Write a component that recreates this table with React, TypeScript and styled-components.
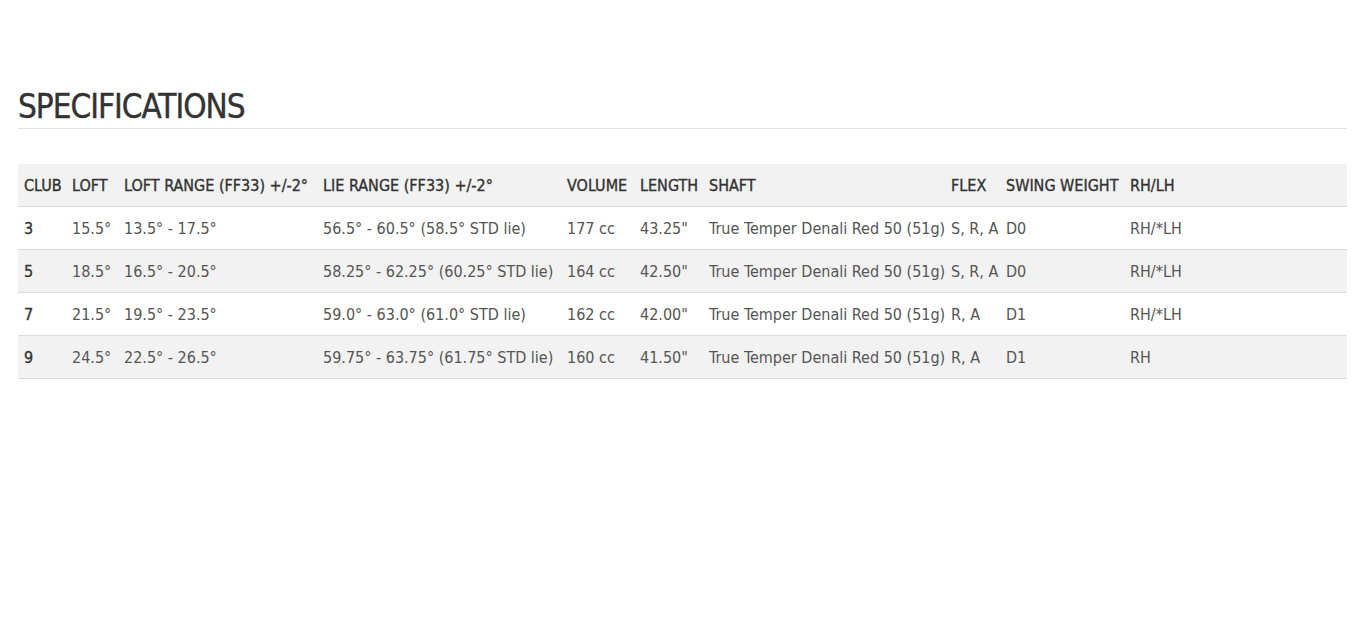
import React from 'react';
import styled, { createGlobalStyle } from 'styled-components';

const GlobalStyle = createGlobalStyle`
  body {
    margin: 0;
    background: #fff;
    font-family: "DejaVu Sans Condensed", "Liberation Sans", sans-serif;
  }
`;

const Page = styled.section`
  padding: 88px 19px 0 18px;
`;

const Title = styled.h2`
  margin: 0;
  font-size: 33px;
  line-height: 38px;
  font-weight: 400;
  color: #333;
  -webkit-text-stroke: 0.4px #333;
  padding-bottom: 2px;
  border-bottom: 1px solid #e2e2e2;
  letter-spacing: -1px;
`;

const SpecTable = styled.table`
  margin-top: 35px;
  width: 100%;
  border-collapse: collapse;
  table-layout: fixed;
  font-size: 16px;
  color: #555;
`;

const HeadCell = styled.th`
  text-align: left;
  font-weight: 400;
  color: #333;
  -webkit-text-stroke: 0.35px #333;
  padding: 0 0 0 6px;
  height: 42px;
  white-space: nowrap;
  overflow: hidden;
`;

const Row = styled.tr<{ $shaded?: boolean }>`
  background: ${(p) => (p.$shaded ? '#f2f2f2' : '#fff')};
  border-bottom: 1px solid #dcdcdc;
`;

const Cell = styled.td<{ $strong?: boolean }>`
  padding: 0 0 0 6px;
  height: 42px;
  white-space: nowrap;
  overflow: hidden;
  color: ${(p) => (p.$strong ? '#333' : '#555')};
  -webkit-text-stroke: ${(p) => (p.$strong ? '0.35px #333' : '0')};
`;

const columns = [
  { label: 'CLUB', width: 48 },
  { label: 'LOFT', width: 52 },
  { label: 'LOFT RANGE (FF33) +/-2°', width: 199 },
  { label: 'LIE RANGE (FF33) +/-2°', width: 244 },
  { label: 'VOLUME', width: 73 },
  { label: 'LENGTH', width: 69 },
  { label: 'SHAFT', width: 242 },
  { label: 'FLEX', width: 55 },
  { label: 'SWING WEIGHT', width: 124 },
  { label: 'RH/LH', width: 223 },
];

const rows = [
  ['3', '15.5°', '13.5° - 17.5°', '56.5° - 60.5° (58.5° STD lie)', '177 cc', '43.25"', 'True Temper Denali Red 50 (51g)', 'S, R, A', 'D0', 'RH/*LH'],
  ['5', '18.5°', '16.5° - 20.5°', '58.25° - 62.25° (60.25° STD lie)', '164 cc', '42.50"', 'True Temper Denali Red 50 (51g)', 'S, R, A', 'D0', 'RH/*LH'],
  ['7', '21.5°', '19.5° - 23.5°', '59.0° - 63.0° (61.0° STD lie)', '162 cc', '42.00"', 'True Temper Denali Red 50 (51g)', 'R, A', 'D1', 'RH/*LH'],
  ['9', '24.5°', '22.5° - 26.5°', '59.75° - 63.75° (61.75° STD lie)', '160 cc', '41.50"', 'True Temper Denali Red 50 (51g)', 'R, A', 'D1', 'RH'],
];

const App: React.FC = () => (
  <>
    <GlobalStyle />
    <Page>
      <Title>SPECIFICATIONS</Title>
      <SpecTable>
        <colgroup>
          {columns.map((c) => (
            <col key={c.label} style={{ width: c.width }} />
          ))}
        </colgroup>
        <thead>
          <Row $shaded>
            {columns.map((c) => (
              <HeadCell key={c.label}>{c.label}</HeadCell>
            ))}
          </Row>
        </thead>
        <tbody>
          {rows.map((r, i) => (
            <Row key={r[0]} $shaded={i % 2 === 1}>
              {r.map((v, j) => (
                <Cell key={j} $strong={j === 0}>{v}</Cell>
              ))}
            </Row>
          ))}
        </tbody>
      </SpecTable>
    </Page>
  </>
);

export default App;
